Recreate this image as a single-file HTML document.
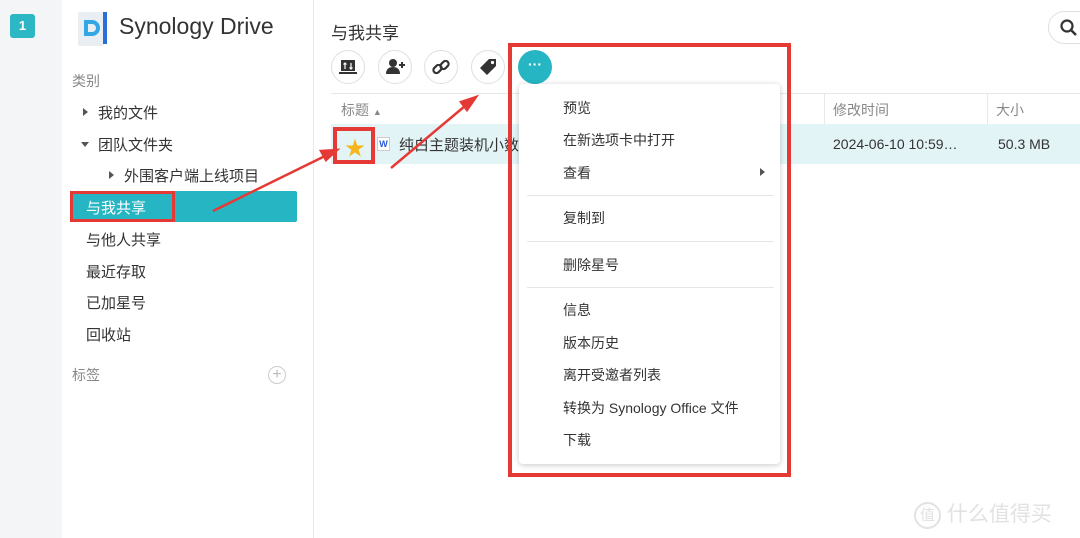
<!DOCTYPE html>
<html><head><meta charset="utf-8"><style>
*{margin:0;padding:0;box-sizing:border-box}
body{width:1080px;height:538px;overflow:hidden;background:#fff;font-family:"Liberation Sans","Noto Sans CJK SC",sans-serif;color:#333;position:relative}
.a{position:absolute}
.strip{left:0;top:0;width:62px;height:538px;background:#f4f5f7}
.badge{left:10px;top:14px;width:25px;height:24px;background:#2db7c4;border-radius:3px;color:#fff;font-size:13px;font-weight:bold;text-align:center;line-height:24px}
.side{left:62px;top:0;width:252px;height:538px;border-right:1px solid #e6e8eb}
.t{font-size:15px;color:#333;white-space:nowrap}
.g{color:#888}
.tri{width:0;height:0;border-top:4px solid transparent;border-bottom:4px solid transparent;border-left:5px solid #555}
.trd{width:0;height:0;border-left:4px solid transparent;border-right:4px solid transparent;border-top:5px solid #555}
.btn{width:34px;height:34px;border-radius:50%;border:1px solid #dcdfe3;background:#fff}
.mi{left:563px;font-size:14px;color:#333}
.sep{left:527px;width:247px;height:1px;background:#e4e6e9}
</style></head><body>
<div class="a strip"></div>
<div class="a badge">1</div>
<div class="a side"></div>
<svg class="a" style="left:76px;top:10px" width="34" height="38" viewBox="0 0 34 38">
<rect x="2" y="2" width="26" height="34" rx="2" fill="#e9eef3"/>
<rect x="27" y="2" width="4" height="32" fill="#2a6fd6"/>
<path d="M8 10h8a8 8 0 0 1 0 16H8z" fill="#33a6e6"/><path d="M12 14h4a4 4 0 0 1 0 8h-4z" fill="#e9eef3"/>
</svg>
<div class="a" style="left:119px;top:13px;font-size:23px;color:#333">Synology Drive</div>
<div class="a t g" style="left:72px;top:71px;font-size:14px">类别</div>
<div class="a tri" style="left:83px;top:108px"></div><div class="a t" style="left:98px;top:102px">我的文件</div>
<div class="a trd" style="left:81px;top:142px"></div><div class="a t" style="left:98px;top:134px">团队文件夹</div>
<div class="a tri" style="left:109px;top:171px"></div><div class="a t" style="left:124px;top:165px">外围客户端上线项目</div>
<div class="a" style="left:70px;top:191px;width:227px;height:31px;background:#26b5c3;border-radius:2px"></div>
<div class="a t" style="left:86px;top:197px;color:#fff">与我共享</div>
<div class="a" style="left:70px;top:191px;width:105px;height:31px;border:3px solid #e53935"></div>
<div class="a t" style="left:86px;top:229px">与他人共享</div>
<div class="a t" style="left:86px;top:261px">最近存取</div>
<div class="a t" style="left:86px;top:292px">已加星号</div>
<div class="a t" style="left:86px;top:324px">回收站</div>
<div class="a t g" style="left:72px;top:365px;font-size:14px">标签</div>
<div class="a" style="left:268px;top:366px;width:18px;height:18px;border:1px solid #ccc;border-radius:50%;color:#bbb;font-size:16px;line-height:15px;text-align:center">+</div>
<div class="a" style="left:331px;top:19px;font-size:17px;color:#333">与我共享</div>
<div class="a" style="left:1048px;top:11px;width:50px;height:33px;border:1px solid #dcdfe3;border-radius:17px"></div>
<svg class="a" style="left:1060px;top:19px" width="18" height="18"><circle cx="7" cy="7" r="5.5" fill="none" stroke="#333" stroke-width="2.2"/><path d="M11 11l5 5" stroke="#333" stroke-width="2.5"/></svg>
<div class="a btn" style="left:331px;top:50px"></div>
<svg class="a" style="left:339px;top:58px" width="18" height="18"><rect x="2" y="2" width="14" height="11" fill="#333"/><rect x="0" y="14" width="18" height="2" fill="#333"/><path d="M6 5v6M4.5 6.5L6 5l1.5 1.5M12 5v6M10.5 9.5L12 11l1.5-1.5" stroke="#fff" stroke-width="1.2" fill="none"/></svg>
<div class="a btn" style="left:378px;top:50px"></div>
<svg class="a" style="left:386px;top:58px" width="20" height="18"><circle cx="7" cy="5" r="4" fill="#333"/><path d="M0 16c0-5 3-7 7-7s7 2 7 7z" fill="#333"/><path d="M16 4v6M13 7h6" stroke="#333" stroke-width="2"/></svg>
<div class="a btn" style="left:424px;top:50px"></div>
<svg class="a" style="left:432px;top:58px" width="18" height="18"><g fill="none" stroke="#333" stroke-width="2.2"><rect x="1" y="8" width="9" height="6" rx="3" transform="rotate(-45 5.5 11)"/><rect x="8" y="4" width="9" height="6" rx="3" transform="rotate(-45 12.5 7)"/></g></svg>
<div class="a btn" style="left:471px;top:50px"></div>
<svg class="a" style="left:479px;top:58px" width="18" height="18"><path d="M10 1h7v7l-9 9-7-7z" fill="#333"/><circle cx="13.5" cy="4.5" r="1.6" fill="#fff"/></svg>
<div class="a" style="left:518px;top:50px;width:34px;height:34px;border-radius:50%;background:#26b5c3;color:#fff;text-align:center;font-size:14px;line-height:28px;font-weight:bold">···</div>
<div class="a" style="left:331px;top:93px;width:749px;height:1px;background:#e6e8eb"></div>
<div class="a t g" style="left:341px;top:100px;font-size:14px">标题 <span style="font-size:9px">▲</span></div>
<div class="a" style="left:824px;top:94px;width:1px;height:30px;background:#e6e8eb"></div>
<div class="a" style="left:987px;top:94px;width:1px;height:30px;background:#e6e8eb"></div>
<div class="a t g" style="left:833px;top:100px;font-size:14px">修改时间</div>
<div class="a t g" style="left:996px;top:100px;font-size:14px">大小</div>
<div class="a" style="left:331px;top:124px;width:749px;height:40px;background:#e3f4f7"></div>
<div class="a" style="left:345px;top:132px;font-size:20px;color:#f5b51b">★</div>
<div class="a" style="left:333px;top:127px;width:42px;height:37px;border:4px solid #e53935"></div>
<div class="a" style="left:377px;top:137px;width:13px;height:14px;border:1px solid #ccc;background:#fff;color:#2a5bd7;font-size:9px;font-weight:bold;text-align:center;line-height:12px">W</div>
<div class="a t" style="left:399px;top:134px">纯白主题装机小数</div>
<div class="a t" style="left:833px;top:136px;font-size:14px">2024-06-10 10:59…</div>
<div class="a t" style="left:998px;top:136px;font-size:14px">50.3 MB</div>
<div class="a" style="left:519px;top:84px;width:261px;height:380px;background:#fff;border-radius:4px;box-shadow:0 1px 6px rgba(0,0,0,.22)"></div>
<div class="a mi" style="top:98px">预览</div>
<div class="a mi" style="top:130px">在新选项卡中打开</div>
<div class="a mi" style="top:163px">查看</div>
<div class="a tri" style="left:760px;top:168px"></div>
<div class="a sep" style="top:195px"></div>
<div class="a mi" style="top:208px">复制到</div>
<div class="a sep" style="top:241px"></div>
<div class="a mi" style="top:255px">删除星号</div>
<div class="a sep" style="top:287px"></div>
<div class="a mi" style="top:300px">信息</div>
<div class="a mi" style="top:333px">版本历史</div>
<div class="a mi" style="top:365px">离开受邀者列表</div>
<div class="a mi" style="top:398px">转换为 Synology Office 文件</div>
<div class="a mi" style="top:430px">下载</div>
<div class="a" style="left:508px;top:43px;width:283px;height:434px;border:4px solid #e53935"></div>
<svg class="a" style="left:0;top:0" width="1080" height="538">
<g stroke="#e53935" stroke-width="2.5" fill="#e53935">
<line x1="213" y1="211" x2="325" y2="156"/><path d="M337 150l-16 1 5 9z"/>
<line x1="391" y1="168" x2="465" y2="106"/><path d="M476 97l-15 5 6 8z"/>
</g></svg>
<div class="a" style="left:914px;top:498px;font-size:21px;color:#e2e2e2;white-space:nowrap"><span style="display:inline-block;width:27px;height:27px;border:2px solid #e2e2e2;border-radius:50%;font-size:15px;text-align:center;line-height:23px;vertical-align:middle">值</span> 什么值得买</div>
</body></html>
